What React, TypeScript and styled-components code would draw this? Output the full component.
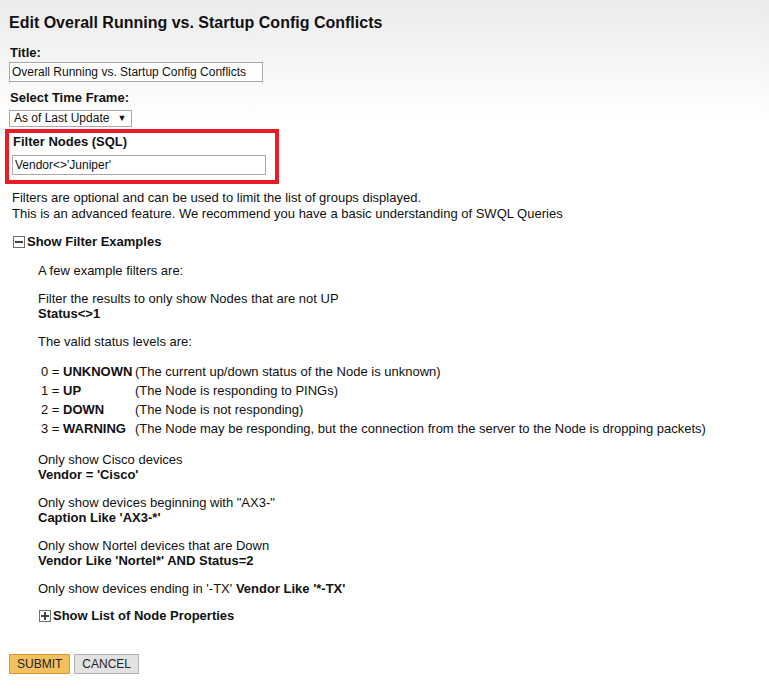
import React from "react";
import styled, { createGlobalStyle } from "styled-components";

const Global = createGlobalStyle`
  html, body { margin: 0; padding: 0; }
  body {
    background: linear-gradient(#ebebeb 0px, #ffffff 120px) no-repeat, #ffffff;
    min-height: 694px;
    font-family: "Liberation Sans", Arial, sans-serif;
    color: #111;
  }
`;

const Page = styled.div`
  padding: 13px 9px 20px 9px;
  font-size: 13px;
`;

const Heading = styled.h1`
  margin: 0;
  font-size: 16px;
  line-height: 20px;
  font-weight: bold;
  color: #111;
`;

const Label = styled.div<{ $mt?: number }>`
  margin-top: ${(p) => p.$mt ?? 0}px;
  padding-left: 1px;
  font-size: 13px;
  line-height: 16px;
  font-weight: bold;
`;

const TextInput = styled.input<{ $mt?: number }>`
  display: block;
  box-sizing: border-box;
  width: 254px;
  height: 20px;
  margin: ${(p) => p.$mt ?? 1}px 0 0 0;
  padding: 0 2px;
  border: 1px solid #a9a9a9;
  background: #fff;
  font-family: "Liberation Sans", Arial, sans-serif;
  font-size: 12px;
  color: #111;
  outline: none;
`;

const SelectBox = styled.div`
  display: inline-flex;
  align-items: center;
  box-sizing: border-box;
  margin-top: 4px;
  width: 123px;
  height: 17px;
  padding: 0 4px;
  border: 1px solid #a9a9a9;
  background: #fff;
  font-size: 12px;
  line-height: 15px;
  gap: 8px;
`;

const Arrow = styled.span`
  font-size: 9px;
`;

const Highlight = styled.div`
  box-sizing: border-box;
  width: 274px;
  margin: 2px 0 0 -4px;
  padding: 1px 9px 5px 3px;
  border: 4px solid #ec1c24;
`;

const Help = styled.div`
  margin-top: 6px;
  padding-left: 3px;
  font-size: 13px;
  line-height: 16px;
`;

const Toggle = styled.div<{ $mt: number; $indent: number }>`
  display: flex;
  align-items: center;
  margin-top: ${(p) => p.$mt}px;
  padding-left: ${(p) => p.$indent}px;
  font-size: 13px;
  line-height: 16px;
  font-weight: bold;
`;

const ToggleIcon = styled.span`
  position: relative;
  box-sizing: border-box;
  width: 12px;
  height: 12px;
  margin-right: 2px;
  border: 1px solid #6d6d6d;
  background: #fff;
  flex: none;
  &::before {
    content: "";
    position: absolute;
    left: 1px;
    right: 1px;
    top: 4px;
    height: 2px;
    background: #444;
  }
`;

const PlusIcon = styled(ToggleIcon)`
  &::after {
    content: "";
    position: absolute;
    top: 1px;
    bottom: 1px;
    left: 4px;
    width: 2px;
    background: #444;
  }
`;

const Examples = styled.div`
  padding-left: 29px;
  padding-top: 13px;
  font-size: 13px;
  line-height: 15px;
`;

const Para = styled.p<{ $mt?: number }>`
  margin: ${(p) => p.$mt ?? 13}px 0 0 0;
  &:first-child { margin-top: 0; }
`;

const Table = styled.div`
  display: grid;
  grid-template-columns: 94px auto;
  margin-top: 13px;
  padding-left: 3px;
  line-height: 19px;
`;

const Footer = styled.div`
  display: flex;
  gap: 4px;
  margin-top: 30px;
`;

const Button = styled.button<{ $primary?: boolean }>`
  box-sizing: border-box;
  height: 20px;
  padding: 0 7px;
  border: 1px solid ${(p) => (p.$primary ? "#e0982a" : "#b3b3b3")};
  background: ${(p) => (p.$primary ? "#f2c15e" : "#e2e2e2")};
  font-family: "Liberation Sans", Arial, sans-serif;
  font-size: 12px;
  color: #222;
  line-height: 18px;
`;

const rows: [string, string, string][] = [
  ["0", "UNKNOWN", "(The current up/down status of the Node is unknown)"],
  ["1", "UP", "(The Node is responding to PINGs)"],
  ["2", "DOWN", "(The Node is not responding)"],
  ["3", "WARNING", "(The Node may be responding, but the connection from the server to the Node is dropping packets)"],
];

export default function App() {
  return (
    <>
      <Global />
      <Page>
        <Heading>Edit Overall Running vs. Startup Config Conflicts</Heading>
        <Label $mt={12}>Title:</Label>
        <TextInput defaultValue="Overall Running vs. Startup Config Conflicts" />
        <Label $mt={8}>Select Time Frame:</Label>
        <SelectBox>
          <span>As of Last Update</span>
          <Arrow>▼</Arrow>
        </SelectBox>
        <Highlight>
          <Label>Filter Nodes (SQL)</Label>
          <TextInput $mt={5} defaultValue="Vendor<>'Juniper'" />
        </Highlight>
        <Help>
          Filters are optional and can be used to limit the list of groups displayed.
          <br />
          This is an advanced feature. We recommend you have a basic understanding of SWQL Queries
        </Help>
        <Toggle $mt={12} $indent={4}>
          <ToggleIcon />
          Show Filter Examples
        </Toggle>
        <Examples>
          <Para>A few example filters are:</Para>
          <Para>
            Filter the results to only show Nodes that are not UP
            <br />
            <b>Status&lt;&gt;1</b>
          </Para>
          <Para>The valid status levels are:</Para>
          <Table>
            {rows.map(([n, name, desc]) => (
              <React.Fragment key={n}>
                <span>
                  {n} = <b>{name}</b>
                </span>
                <span>{desc}</span>
              </React.Fragment>
            ))}
          </Table>
          <Para $mt={14}>
            Only show Cisco devices
            <br />
            <b>Vendor = 'Cisco'</b>
          </Para>
          <Para>
            Only show devices beginning with "AX3-"
            <br />
            <b>Caption Like 'AX3-*'</b>
          </Para>
          <Para>
            Only show Nortel devices that are Down
            <br />
            <b>Vendor Like 'Nortel*' AND Status=2</b>
          </Para>
          <Para>
            Only show devices ending in '-TX' <b>Vendor Like '*-TX'</b>
          </Para>
          <Toggle $mt={12} $indent={1}>
            <PlusIcon />
            Show List of Node Properties
          </Toggle>
        </Examples>
        <Footer>
          <Button $primary>SUBMIT</Button>
          <Button>CANCEL</Button>
        </Footer>
      </Page>
    </>
  );
}
